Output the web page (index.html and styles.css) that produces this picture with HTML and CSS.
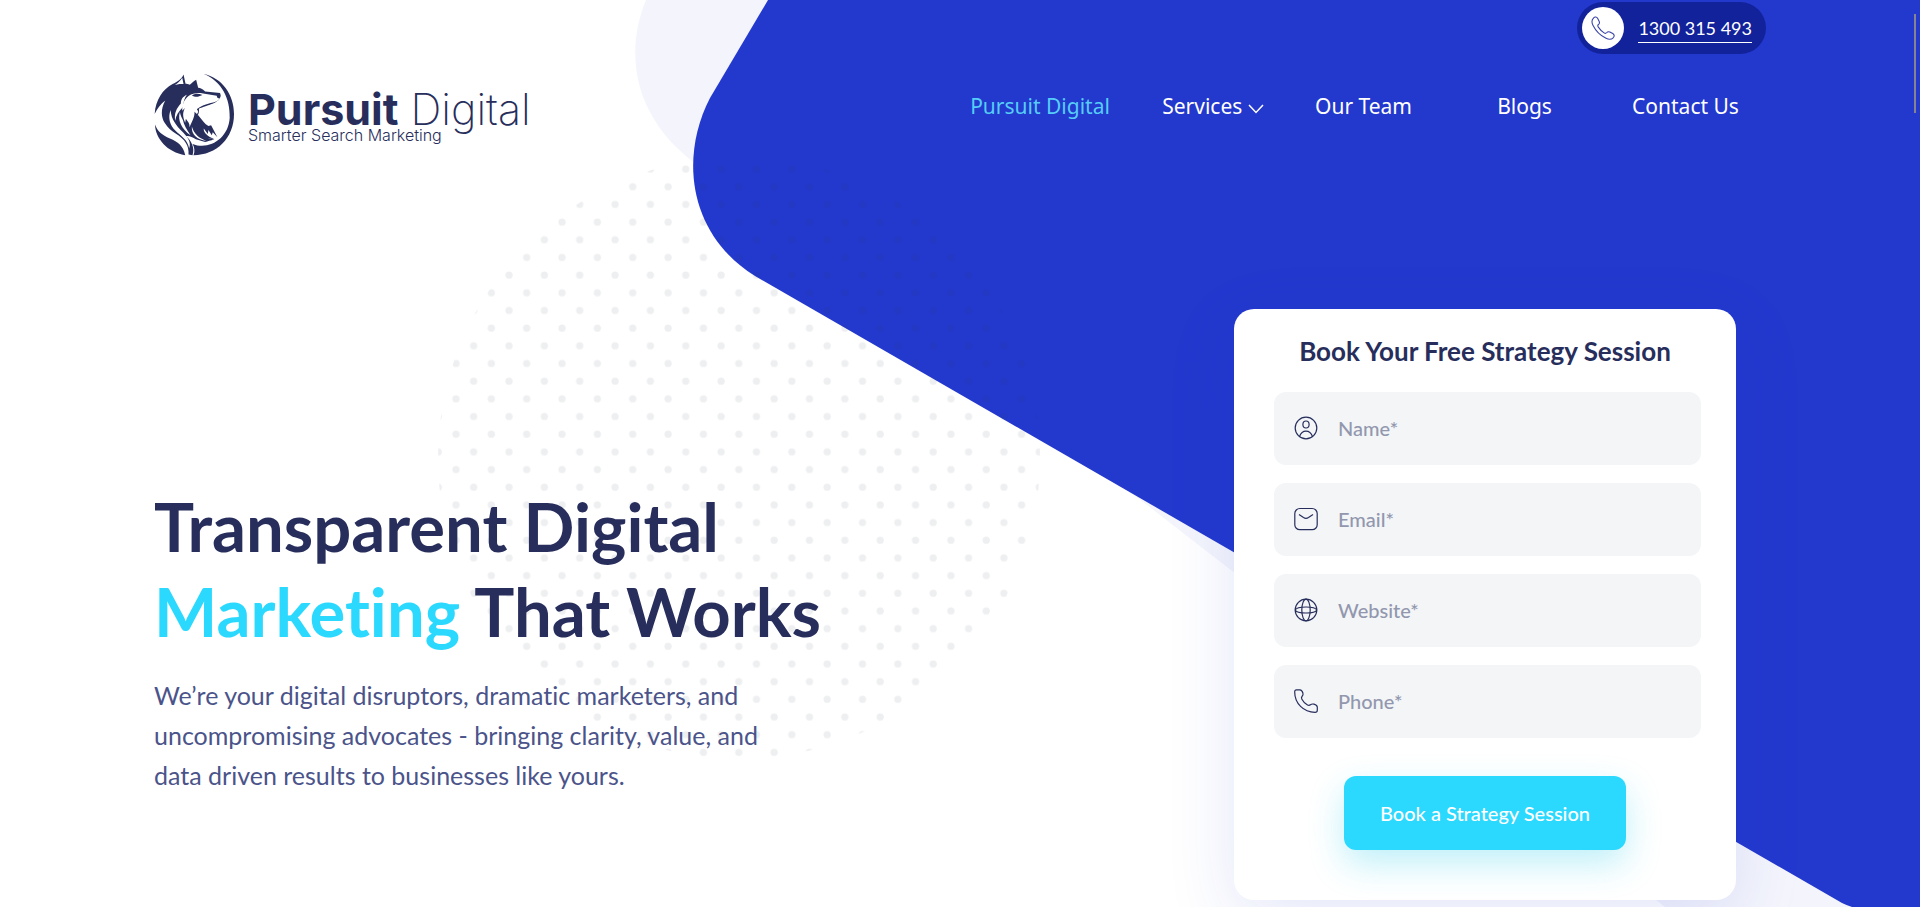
FILE: index.html
```html
<!DOCTYPE html>
<html lang="en">
<head>
<meta charset="utf-8">
<meta name="viewport" content="width=device-width, initial-scale=1">
<title>Pursuit Digital</title>
<link rel="stylesheet" href="styles.css">
</head>
<body>
<div class="page">
  <svg class="backdrop" viewBox="0 0 1920 907" preserveAspectRatio="xMinYMin slice" aria-hidden="true">
    <defs>
      <pattern id="dots" x="447" y="354.5" width="35.35" height="35.35" patternUnits="userSpaceOnUse">
        <circle cx="9" cy="9" r="3.6"/>
        <circle cx="26.67" cy="26.67" r="3.6"/>
      </pattern>
    </defs>
    <path class="shape-light" d="M646 0C628 43 634 88 654 119C664 136 676 148 692 161L1147 505L1665 907H1920V0Z"/>
    <path class="shape-blue" d="M768 0L710 98C679 158 689 235 755 276L1842 903Q1846 905 1852 907H1920V0Z"/>
    <circle class="dots" cx="739" cy="458" r="301" fill="url(#dots)"/>
  </svg>

  <header class="header">
    <div class="topbar">
      <a class="phone" href="tel:1300315493">
        <span class="phone-icon">
          <svg viewBox="0 0 24 24" width="26" height="26"><path d="M3.2 2.8C4.4 1.5 6.2 1.6 7 3.1L8.500 6C9 7.200 8.600 8.300 7.600 9C7 9.500 7.200 10.400 7.700 11.200C9.300 13.600 10.700 15 13 16.500C13.900 17.100 14.700 17.100 15.300 16.400C16.100 15.400 17.200 15.200 18.300 15.700L21 17.100C22.500 18 22.700 19.400 21.600 20.800C19.900 22.700 17.400 22.800 14.800 21.500C9.500 18.900 5.400 14.800 2.700 9.400C1.400 6.800 1.500 4.600 3.200 2.800Z"/></svg>
        </span>
        <span class="phone-number">1300 315 493</span>
      </a>
    </div>
    <div class="bar">
      <a class="logo" href="#" aria-label="Pursuit Digital home">
        <svg class="emblem" viewBox="14 14 244 252" aria-hidden="true">
          <path class="ink" d="M163 19C220 32 255 82 255 140C255 212 203 264 133 264C138 252 136 240 130 230C180 250 238 214 242 152C244 95 219 42 163 19Z"/>
          <path class="ink" d="M103 21C97 36 84 42 70 50C40 66 19 98 16 140C24 122 34 110 48 99C33 126 36 150 46 166C56 182 66 190 78 198C108 216 120 236 118 262L130 264C138 240 126 220 110 206C126 206 134 212 140 216L168 224C176 222 184 220 196 216C168 214 150 200 146 142C152 138 150 130 149 124C175 112 212 108 215 84L213 77L168 72C160 64 154 62 147 61L141 37C132 42 128 47 122 52C116 50 112 49 109 49Z"/>
          <path class="ink" d="M17 172C18 214 54 256 108 264C102 236 86 224 62 214C38 204 24 192 17 172Z"/>
          <path class="paper" d="M99 31C92 43 84 48 77 53C86 50 96 50 103 50Z"/>
          <path class="paper" d="M64 128C55 152 62 174 78 190C94 206 116 218 120 244C128 222 112 206 98 192C80 174 66 156 64 128Z"/>
          <path class="paper" d="M92 134C84 160 98 186 124 204C112 186 104 172 101 158C97 150 93 142 92 134Z"/>
          <path class="paper" d="M113 82C100 88 95 96 95 108C82 122 74 138 78 160C80 144 88 132 102 118C102 104 106 92 113 82Z"/>
          <path class="paper" d="M118 86C132 76 146 76 162 78L203 85C204 92 208 94 212 92C209 100 202 103 192 105C172 109 152 116 143 126C148 130 148 137 143 140L136 133C137 150 128 162 121 180C122 168 117 164 110 154L108 166C100 148 100 136 107 122L99 130C99 108 106 96 118 86Z"/>
          <path class="paper" d="M150 126C176 114 206 112 216 94L236 110L238 160L205 210L186 172L178 176L168 168L148 142Z"/>
          <path class="ink" d="M146 142L163 163L170 171L178 176L186 174L205 210L191 195L188 204L178 188L176 200L164 184C162 196 176 208 196 216C168 216 142 200 130 178Z"/>
          <path class="paper" d="M128 178C134 200 150 214 172 221C144 218 126 202 128 178Z"/>
          <path class="ink" d="M128 84C138 77 148 78 160 83L146 88C139 89 133 87 128 84Z"/>
        </svg>
        <span class="wordmark">
          <span class="brand"><b>Pursuit</b> <span>Digital</span></span>
          <span class="tagline">Smarter Search Marketing</span>
        </span>
      </a>
      <nav class="nav" aria-label="Main">
        <a class="current" href="#">Pursuit Digital</a>
        <a href="#">Services
          <svg viewBox="0 0 16 10" width="16" height="10" aria-hidden="true"><path d="M1 1L8 8.500L15 1"/></svg>
        </a>
        <a href="#">Our Team</a>
        <a href="#">Blogs</a>
        <a href="#">Contact Us</a>
      </nav>
    </div>
  </header>

  <main class="hero">
    <section class="copy">
      <h1>Transparent Digital<br><em>Marketing</em> That Works</h1>
      <p>We’re your digital disruptors, dramatic marketers, and<br>uncompromising advocates - bringing clarity, value, and<br>data driven results to businesses like yours.</p>
    </section>

    <form class="card">
      <h2>Book Your Free Strategy Session</h2>
      <div class="fields">
        <label class="field">
          <svg viewBox="0 0 24 24" aria-hidden="true"><circle cx="12" cy="12" r="10.800"/><ellipse cx="12" cy="8.500" rx="3.100" ry="3.500"/><path d="M5.500 20.500C7 16.500 9.300 15.200 12 15.200S17 16.500 18.500 20.500"/></svg>
          <input type="text" name="name" placeholder="Name*" aria-label="Name">
        </label>
        <label class="field">
          <svg viewBox="0 0 24 24" aria-hidden="true"><rect x=".8" y="1.500" width="22.400" height="21.200" rx="5"/><path d="M5 7.500L9.500 10.600Q12 12.200 14.500 10.600L19 7.500"/></svg>
          <input type="email" name="email" placeholder="Email*" aria-label="Email">
        </label>
        <label class="field">
          <svg viewBox="0 0 24 24" aria-hidden="true"><circle cx="12" cy="12" r="10.800"/><ellipse cx="12" cy="12" rx="4.200" ry="10.800"/><path d="M1.200 12C3 8 21 8 22.800 12M1.200 12C3 16 21 16 22.800 12"/></svg>
          <input type="text" name="website" placeholder="Website*" aria-label="Website">
        </label>
        <label class="field">
          <svg viewBox="0 0 24 24" aria-hidden="true"><path d="M2.500 .9H6C7.600 .9 8.300 2.200 8.900 4C9.400 5.600 9.200 6.300 8 7.500C7.200 8.400 7.300 9.200 7.900 10.300C9.200 12.800 11 14.600 13.500 16C14.800 16.700 15.600 16.500 16.400 15.800C17.600 14.900 18.600 14.800 20 15.200C22 15.800 23.300 16.600 23.300 18.200V21.200C23.300 22.700 22.500 23.300 21 23.300C9.600 23.300 .7 14.400 .7 3C.7 1.500 1.300 .9 2.500 .9Z"/></svg>
          <input type="tel" name="phone" placeholder="Phone*" aria-label="Phone">
        </label>
      </div>
      <button class="submit" type="submit">Book a Strategy Session</button>
    </form>
  </main>
  <div class="scroll-thumb" aria-hidden="true"></div>
</div>
</body>
</html>
```
FILE: styles.css
```css
* { box-sizing: border-box; }

:root {
  --blue: #2338cd;
  --blue-dark: #12229b;
  --ink: #272e5c;
  --cyan: #2bd9ff;
  --gutter: 154px;
}

body {
  margin: 0;
  background: #fff;
  color: var(--ink);
  font-family: Lato, "Liberation Sans", sans-serif;
  font-variant-ligatures: none;
}

a { color: inherit; text-decoration: none; }

.page {
  position: relative;
  min-height: 100vh;
  overflow: hidden;
}

.backdrop {
  position: absolute;
  inset: 0;
  z-index: -1;
  width: 100%;
  height: 100%;
}
.shape-light { fill: #f4f5fc; }
.shape-blue { fill: var(--blue); }
.backdrop pattern { fill: #2b2e50; fill-opacity: .08; }

.topbar {
  display: flex;
  justify-content: flex-end;
  padding: 2px var(--gutter) 0;
}
.phone {
  display: flex;
  align-items: center;
  gap: 14px;
  height: 52px;
  padding: 0 14px 0 5px;
  border-radius: 26px;
  background: var(--blue-dark);
  color: #fff;
  font-size: 18px;
}
.phone-icon {
  display: grid;
  place-items: center;
  width: 42px;
  height: 42px;
  border-radius: 50%;
  background: #fff;
}
.phone-icon path { fill: none; stroke: #3a43a8; stroke-width: 1; }
.phone-number { border-bottom: 1px solid #fff; line-height: 28px; }

.bar {
  display: flex;
  align-items: center;
  justify-content: space-between;
  padding: 18px var(--gutter) 0;
}
.logo { display: flex; align-items: center; gap: 13px; }
.emblem { width: 81px; height: 84px; }
.ink { fill: var(--ink); }
.paper { fill: #fff; }
.wordmark {
  display: flex;
  flex-direction: column;
  padding-top: 6px;
  font-family: Inter, "Liberation Sans", sans-serif;
}
.brand { font-size: 43px; line-height: 36px; font-weight: 200; }
.brand b { font-weight: 700; }
.tagline { font-size: 16px; line-height: 16px; font-weight: 300; }

.nav {
  display: grid;
  grid-template-columns: 206px 140px repeat(3, 161px);
  padding-bottom: 16px;
  color: #fff;
  font-family: "Noto Sans", sans-serif;
  font-size: 21px;
  line-height: 32px;
  text-align: center;
  white-space: nowrap;
}
.nav svg { fill: none; stroke: #fff; stroke-width: 1.5; }
.current { color: #56cdf8; }

.hero {
  display: flex;
  align-items: flex-start;
  justify-content: space-between;
  gap: 40px;
  padding: 153px 184px 0 var(--gutter);
}
.copy { padding-top: 175px; }
h1 {
  margin: 0 0 21px;
  font-size: 67px;
  line-height: 85px;
  font-weight: 700;
}
h1 em { color: var(--cyan); font-style: normal; }
.copy p {
  margin: 0;
  color: #4b548a;
  font-size: 25px;
  line-height: 40px;
}

.card {
  flex: 0 0 502px;
  display: flex;
  flex-direction: column;
  padding: 25px 35px 50px;
  border-radius: 20px;
  background: #fff;
  box-shadow: 0 20px 70px rgba(35, 56, 205, .12);
}
h2 {
  margin: 0 0 24px;
  font-size: 26px;
  line-height: 34px;
  font-weight: 700;
  text-align: center;
}
.fields { display: grid; gap: 18px; margin-left: 5px; }
.field {
  display: flex;
  align-items: center;
  gap: 20px;
  height: 73px;
  padding: 0 20px 2px;
  border-radius: 12px;
  background: #f3f5f7;
}
.field svg {
  flex: none;
  width: 24px;
  height: 24px;
  fill: none;
  stroke: var(--ink);
  stroke-width: 1.2;
}
.field input {
  flex: 1;
  min-width: 0;
  padding: 0;
  border: 0;
  outline: 0;
  background: none;
  color: var(--ink);
  font: 500 20px/28px Lato, sans-serif;
}
.field input::placeholder { color: #9297ae; opacity: 1; }
.submit {
  align-self: center;
  width: 282px;
  height: 74px;
  margin-top: 38px;
  border: 0;
  border-radius: 12px;
  background: var(--cyan);
  box-shadow: 0 14px 34px rgba(43, 205, 235, .3);
  color: #fff;
  font: 500 20px/28px Lato, sans-serif;
}

.scroll-thumb {
  position: absolute;
  top: 14px;
  right: 4px;
  width: 2px;
  height: 99px;
  background: #85858f;
}
```
